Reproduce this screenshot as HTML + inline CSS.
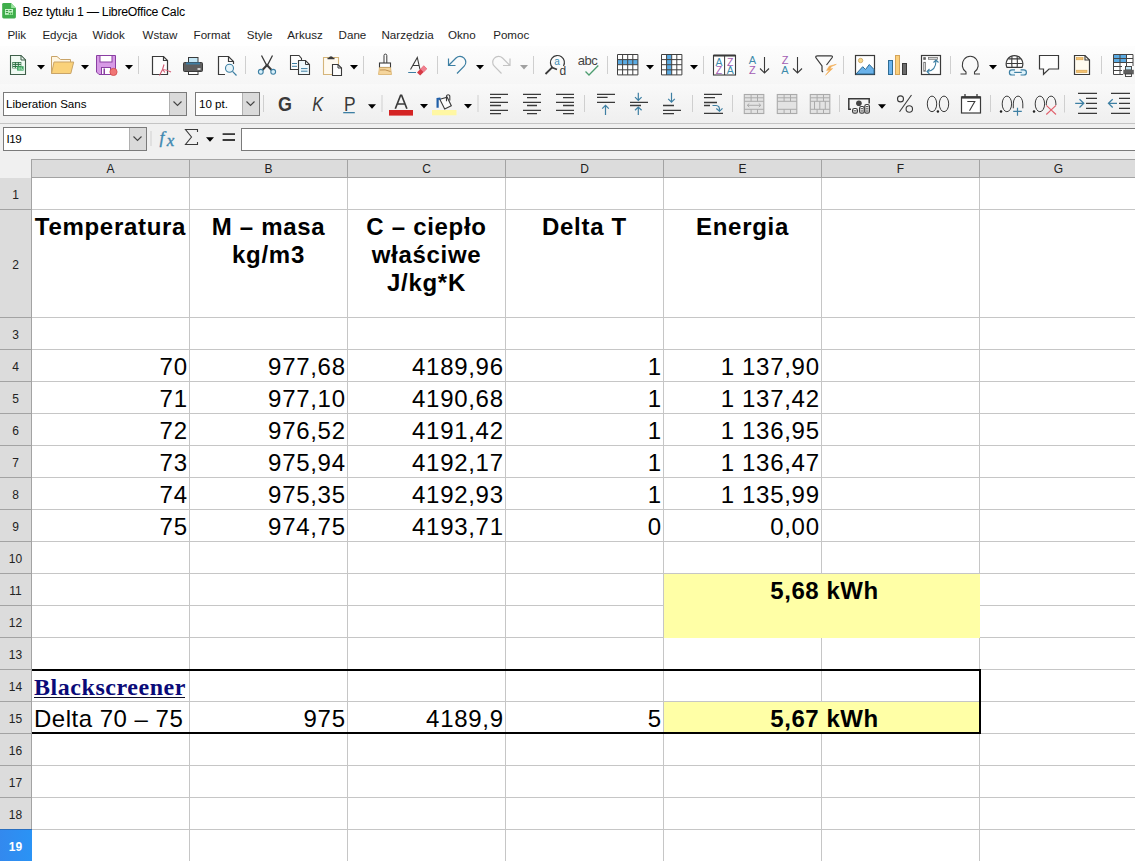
<!DOCTYPE html><html><head><meta charset="utf-8"><style>
*{margin:0;padding:0;box-sizing:border-box}
html,body{width:1135px;height:861px;overflow:hidden;background:#fff;font-family:"Liberation Sans",sans-serif}
.ab{position:absolute}
.t{position:absolute;white-space:nowrap;color:#000}
.ui{font-size:11.6px;color:#1a1a1a}
.cell{font-size:24px;line-height:28px;letter-spacing:0.7px}
.b{font-weight:bold}
.hl{position:absolute;height:1px;background:#c6c6c6}
.vl{position:absolute;width:1px;background:#c6c6c6}
.hdr{font-size:12px;color:#222;text-align:center;line-height:14px}
</style></head><body>

<div class="ab" style="left:0;top:0;width:1135px;height:46px;background:#fff"></div>
<div class="ab" style="left:0;top:46px;width:1135px;height:38px;background:linear-gradient(#fdfdfd,#f6f6f6)"></div>
<div class="ab" style="left:0;top:84px;width:1135px;height:39px;background:linear-gradient(#f9f9f9,#efefef)"></div>
<div class="ab" style="left:0;top:123px;width:1135px;height:1px;background:#c4c4c4"></div>
<div class="ab" style="left:0;top:124px;width:1135px;height:35px;background:#f0f0f0"></div>
<div class="t ui" style="left:22.5px;top:2.8px;font-size:12.3px;letter-spacing:-0.27px;line-height:18px;color:#000">Bez tytułu 1 — LibreOffice Calc</div>
<div class="t ui" style="left:7.4px;top:26px;line-height:18px;color:#1e1e1e">Plik</div>
<div class="t ui" style="left:42.4px;top:26px;line-height:18px;color:#1e1e1e">Edycja</div>
<div class="t ui" style="left:92.5px;top:26px;line-height:18px;color:#1e1e1e">Widok</div>
<div class="t ui" style="left:142.6px;top:26px;line-height:18px;color:#1e1e1e">Wstaw</div>
<div class="t ui" style="left:193.6px;top:26px;line-height:18px;color:#1e1e1e">Format</div>
<div class="t ui" style="left:246.7px;top:26px;line-height:18px;color:#1e1e1e">Style</div>
<div class="t ui" style="left:287.3px;top:26px;line-height:18px;color:#1e1e1e">Arkusz</div>
<div class="t ui" style="left:338.6px;top:26px;line-height:18px;color:#1e1e1e">Dane</div>
<div class="t ui" style="left:381.5px;top:26px;line-height:18px;color:#1e1e1e">Narzędzia</div>
<div class="t ui" style="left:448.0px;top:26px;line-height:18px;color:#1e1e1e">Okno</div>
<div class="t ui" style="left:493.2px;top:26px;line-height:18px;color:#1e1e1e">Pomoc</div>
<div class="ab" style="left:0;top:151px;width:1135px;height:8px;background:#f0f0f0"></div>
<div class="ab" style="left:0;top:159px;width:31px;height:19px;background:#f0f0f0"></div>
<div class="ab" style="left:31px;top:159px;width:1104px;height:1px;background:#a3a3a3"></div>
<div class="ab" style="left:32px;top:160px;width:1103px;height:17px;background:#dcdcdc"></div>
<div class="ab" style="left:31px;top:177px;width:1104px;height:1px;background:#a3a3a3"></div>
<div class="ab" style="left:0;top:178px;width:31px;height:683px;background:#dcdcdc"></div>
<div class="ab" style="left:31px;top:159px;width:1px;height:702px;background:#a3a3a3"></div>
<div class="ab" style="left:189px;top:160px;width:1px;height:17px;background:#a3a3a3"></div>
<div class="t hdr" style="left:32px;width:157px;top:162px">A</div>
<div class="ab" style="left:347px;top:160px;width:1px;height:17px;background:#a3a3a3"></div>
<div class="t hdr" style="left:190px;width:157px;top:162px">B</div>
<div class="ab" style="left:505px;top:160px;width:1px;height:17px;background:#a3a3a3"></div>
<div class="t hdr" style="left:348px;width:157px;top:162px">C</div>
<div class="ab" style="left:663px;top:160px;width:1px;height:17px;background:#a3a3a3"></div>
<div class="t hdr" style="left:506px;width:157px;top:162px">D</div>
<div class="ab" style="left:821px;top:160px;width:1px;height:17px;background:#a3a3a3"></div>
<div class="t hdr" style="left:664px;width:157px;top:162px">E</div>
<div class="ab" style="left:979px;top:160px;width:1px;height:17px;background:#a3a3a3"></div>
<div class="t hdr" style="left:822px;width:157px;top:162px">F</div>
<div class="t hdr" style="left:980px;width:157px;top:162px">G</div>
<div class="vl" style="left:189px;top:178px;height:683px"></div>
<div class="vl" style="left:347px;top:178px;height:683px"></div>
<div class="vl" style="left:505px;top:178px;height:683px"></div>
<div class="vl" style="left:663px;top:178px;height:683px"></div>
<div class="vl" style="left:821px;top:178px;height:683px"></div>
<div class="vl" style="left:979px;top:178px;height:683px"></div>
<div class="hl" style="left:32px;top:209px;width:1103px"></div>
<div class="ab" style="left:0;top:209px;width:31px;height:1px;background:#a3a3a3"></div>
<div class="hl" style="left:32px;top:317px;width:1103px"></div>
<div class="ab" style="left:0;top:317px;width:31px;height:1px;background:#a3a3a3"></div>
<div class="hl" style="left:32px;top:349px;width:1103px"></div>
<div class="ab" style="left:0;top:349px;width:31px;height:1px;background:#a3a3a3"></div>
<div class="hl" style="left:32px;top:381px;width:1103px"></div>
<div class="ab" style="left:0;top:381px;width:31px;height:1px;background:#a3a3a3"></div>
<div class="hl" style="left:32px;top:413px;width:1103px"></div>
<div class="ab" style="left:0;top:413px;width:31px;height:1px;background:#a3a3a3"></div>
<div class="hl" style="left:32px;top:445px;width:1103px"></div>
<div class="ab" style="left:0;top:445px;width:31px;height:1px;background:#a3a3a3"></div>
<div class="hl" style="left:32px;top:477px;width:1103px"></div>
<div class="ab" style="left:0;top:477px;width:31px;height:1px;background:#a3a3a3"></div>
<div class="hl" style="left:32px;top:509px;width:1103px"></div>
<div class="ab" style="left:0;top:509px;width:31px;height:1px;background:#a3a3a3"></div>
<div class="hl" style="left:32px;top:541px;width:1103px"></div>
<div class="ab" style="left:0;top:541px;width:31px;height:1px;background:#a3a3a3"></div>
<div class="hl" style="left:32px;top:573px;width:1103px"></div>
<div class="ab" style="left:0;top:573px;width:31px;height:1px;background:#a3a3a3"></div>
<div class="hl" style="left:32px;top:605px;width:1103px"></div>
<div class="ab" style="left:0;top:605px;width:31px;height:1px;background:#a3a3a3"></div>
<div class="hl" style="left:32px;top:637px;width:1103px"></div>
<div class="ab" style="left:0;top:637px;width:31px;height:1px;background:#a3a3a3"></div>
<div class="hl" style="left:32px;top:669px;width:1103px"></div>
<div class="ab" style="left:0;top:669px;width:31px;height:1px;background:#a3a3a3"></div>
<div class="hl" style="left:32px;top:701px;width:1103px"></div>
<div class="ab" style="left:0;top:701px;width:31px;height:1px;background:#a3a3a3"></div>
<div class="hl" style="left:32px;top:733px;width:1103px"></div>
<div class="ab" style="left:0;top:733px;width:31px;height:1px;background:#a3a3a3"></div>
<div class="hl" style="left:32px;top:765px;width:1103px"></div>
<div class="ab" style="left:0;top:765px;width:31px;height:1px;background:#a3a3a3"></div>
<div class="hl" style="left:32px;top:797px;width:1103px"></div>
<div class="ab" style="left:0;top:797px;width:31px;height:1px;background:#a3a3a3"></div>
<div class="hl" style="left:32px;top:829px;width:1103px"></div>
<div class="ab" style="left:0;top:829px;width:31px;height:1px;background:#a3a3a3"></div>
<div class="t hdr" style="left:0;width:31px;top:187.5px">1</div>
<div class="t hdr" style="left:0;width:31px;top:257.5px">2</div>
<div class="t hdr" style="left:0;width:31px;top:327.5px">3</div>
<div class="t hdr" style="left:0;width:31px;top:359.5px">4</div>
<div class="t hdr" style="left:0;width:31px;top:391.5px">5</div>
<div class="t hdr" style="left:0;width:31px;top:423.5px">6</div>
<div class="t hdr" style="left:0;width:31px;top:455.5px">7</div>
<div class="t hdr" style="left:0;width:31px;top:487.5px">8</div>
<div class="t hdr" style="left:0;width:31px;top:519.5px">9</div>
<div class="t hdr" style="left:0;width:31px;top:551.5px">10</div>
<div class="t hdr" style="left:0;width:31px;top:583.5px">11</div>
<div class="t hdr" style="left:0;width:31px;top:615.5px">12</div>
<div class="t hdr" style="left:0;width:31px;top:647.5px">13</div>
<div class="t hdr" style="left:0;width:31px;top:679.5px">14</div>
<div class="t hdr" style="left:0;width:31px;top:711.5px">15</div>
<div class="t hdr" style="left:0;width:31px;top:743.5px">16</div>
<div class="t hdr" style="left:0;width:31px;top:775.5px">17</div>
<div class="t hdr" style="left:0;width:31px;top:807.5px">18</div>
<div class="ab" style="left:0;top:829px;width:32px;height:32px;background:linear-gradient(90deg,#3389ee,#2a93f5)"></div>
<div class="ab" style="left:0;top:829px;width:32px;height:1px;background:#2a6fbf"></div>
<div class="t hdr b" style="left:0;width:31px;top:840px;color:#fff">19</div>
<div class="ab" style="left:664px;top:574px;width:316px;height:64px;background:#ffffa6"></div>
<div class="ab" style="left:664px;top:702px;width:316px;height:31px;background:#ffffa6"></div>
<div class="ab" style="left:32px;top:669px;width:949px;height:2px;background:#000"></div>
<div class="ab" style="left:32px;top:732px;width:949px;height:2px;background:#000"></div>
<div class="ab" style="left:979px;top:669px;width:2px;height:65px;background:#000"></div>
<div class="t cell b" style="left:32px;width:157px;text-align:center;top:212.7px;">Temperatura</div>
<div class="t cell b" style="left:190px;width:157px;text-align:center;top:212.7px;">M – masa<br>kg/m3</div>
<div class="t cell b" style="left:348px;width:157px;text-align:center;top:212.7px;">C – ciepło<br>właściwe<br>J/kg*K</div>
<div class="t cell b" style="left:506px;width:157px;text-align:center;top:212.7px;">Delta T</div>
<div class="t cell b" style="left:664px;width:157px;text-align:center;top:212.7px;">Energia</div>
<div class="t cell" style="left:32px;width:155.7px;text-align:right;top:352.7px;">70</div>
<div class="t cell" style="left:190px;width:155.7px;text-align:right;top:352.7px;">977,68</div>
<div class="t cell" style="left:348px;width:155.7px;text-align:right;top:352.7px;">4189,96</div>
<div class="t cell" style="left:506px;width:155.7px;text-align:right;top:352.7px;">1</div>
<div class="t cell" style="left:664px;width:155.7px;text-align:right;top:352.7px;">1 137,90</div>
<div class="t cell" style="left:32px;width:155.7px;text-align:right;top:384.7px;">71</div>
<div class="t cell" style="left:190px;width:155.7px;text-align:right;top:384.7px;">977,10</div>
<div class="t cell" style="left:348px;width:155.7px;text-align:right;top:384.7px;">4190,68</div>
<div class="t cell" style="left:506px;width:155.7px;text-align:right;top:384.7px;">1</div>
<div class="t cell" style="left:664px;width:155.7px;text-align:right;top:384.7px;">1 137,42</div>
<div class="t cell" style="left:32px;width:155.7px;text-align:right;top:416.7px;">72</div>
<div class="t cell" style="left:190px;width:155.7px;text-align:right;top:416.7px;">976,52</div>
<div class="t cell" style="left:348px;width:155.7px;text-align:right;top:416.7px;">4191,42</div>
<div class="t cell" style="left:506px;width:155.7px;text-align:right;top:416.7px;">1</div>
<div class="t cell" style="left:664px;width:155.7px;text-align:right;top:416.7px;">1 136,95</div>
<div class="t cell" style="left:32px;width:155.7px;text-align:right;top:448.7px;">73</div>
<div class="t cell" style="left:190px;width:155.7px;text-align:right;top:448.7px;">975,94</div>
<div class="t cell" style="left:348px;width:155.7px;text-align:right;top:448.7px;">4192,17</div>
<div class="t cell" style="left:506px;width:155.7px;text-align:right;top:448.7px;">1</div>
<div class="t cell" style="left:664px;width:155.7px;text-align:right;top:448.7px;">1 136,47</div>
<div class="t cell" style="left:32px;width:155.7px;text-align:right;top:480.7px;">74</div>
<div class="t cell" style="left:190px;width:155.7px;text-align:right;top:480.7px;">975,35</div>
<div class="t cell" style="left:348px;width:155.7px;text-align:right;top:480.7px;">4192,93</div>
<div class="t cell" style="left:506px;width:155.7px;text-align:right;top:480.7px;">1</div>
<div class="t cell" style="left:664px;width:155.7px;text-align:right;top:480.7px;">1 135,99</div>
<div class="t cell" style="left:32px;width:155.7px;text-align:right;top:512.7px;">75</div>
<div class="t cell" style="left:190px;width:155.7px;text-align:right;top:512.7px;">974,75</div>
<div class="t cell" style="left:348px;width:155.7px;text-align:right;top:512.7px;">4193,71</div>
<div class="t cell" style="left:506px;width:155.7px;text-align:right;top:512.7px;">0</div>
<div class="t cell" style="left:664px;width:155.7px;text-align:right;top:512.7px;">0,00</div>
<div class="t cell b" style="left:666px;width:317px;text-align:center;top:576.7px;letter-spacing:0.55px">5,68 kWh</div>
<div class="t cell b" style="left:666px;width:317px;text-align:center;top:704.7px;letter-spacing:0.55px">5,67 kWh</div>
<div class="t" style="left:34px;top:673.0px;font-family:'Liberation Serif',serif;font-weight:bold;font-size:24px;line-height:28px;color:#0a0a78;letter-spacing:0.55px">Blackscreener</div>
<div class="ab" style="left:34px;top:697px;width:151px;height:1.2px;background:#101028"></div>
<div class="t cell" style="left:34px;top:704.7px;letter-spacing:0.5px">Delta 70 – 75</div>
<div class="t cell" style="left:190px;width:155.7px;text-align:right;top:704.7px;">975</div>
<div class="t cell" style="left:348px;width:155.7px;text-align:right;top:704.7px;">4189,9</div>
<div class="t cell" style="left:506px;width:155.7px;text-align:right;top:704.7px;">5</div>
<div class="ab" style="left:3px;top:127px;width:144px;height:24px;background:#fff;border:1px solid #7a7a7a"></div>
<div class="ab" style="left:129px;top:128px;width:17px;height:22px;background:#dadada;border-left:1px solid #b0b0b0"></div>
<div class="t ui" style="left:6.4px;top:131px;line-height:16px;color:#000;letter-spacing:-0.4px">I19</div>
<div class="ab" style="left:241px;top:128px;width:900px;height:23px;background:#fff;border:1px solid #7a7a7a"></div>
<div class="ab" style="left:3px;top:92px;width:184px;height:24px;background:#fff;border:1px solid #7a7a7a"></div>
<div class="ab" style="left:169px;top:93px;width:17px;height:22px;background:#dadada;border-left:1px solid #b0b0b0"></div>
<div class="t ui" style="left:6px;top:96px;line-height:16px;color:#000">Liberation Sans</div>
<div class="ab" style="left:195px;top:92px;width:65px;height:24px;background:#fff;border:1px solid #7a7a7a"></div>
<div class="ab" style="left:242px;top:93px;width:17px;height:22px;background:#dadada;border-left:1px solid #b0b0b0"></div>
<div class="t ui" style="left:199px;top:96px;line-height:16px;color:#000">10 pt.</div>
<svg class="ab" style="left:0;top:0" width="1135" height="160"><path d="M10.5,55.5 H21 L25.5,60 V74.5 H10.5 Z" fill="#f0faf3" stroke="#3f5f4a" stroke-width="1.1"/>
<path d="M21,55.5 V60 H25.5 Z" fill="#f0faf3" stroke="#3f5f4a" stroke-width="1"/>
<rect x="12.3" y="62" width="9" height="6.4" fill="#2f6e45"/>
<rect x="12.90" y="62.80" width="2.0" height="1.1" fill="#d6efdc"/>
<rect x="12.90" y="64.90" width="2.0" height="1.1" fill="#d6efdc"/>
<rect x="12.90" y="67.00" width="2.0" height="1.1" fill="#d6efdc"/>
<rect x="15.85" y="62.80" width="2.0" height="1.1" fill="#d6efdc"/>
<rect x="15.85" y="64.90" width="2.0" height="1.1" fill="#d6efdc"/>
<rect x="15.85" y="67.00" width="2.0" height="1.1" fill="#d6efdc"/>
<rect x="18.80" y="62.80" width="2.0" height="1.1" fill="#d6efdc"/>
<rect x="18.80" y="64.90" width="2.0" height="1.1" fill="#d6efdc"/>
<rect x="18.80" y="67.00" width="2.0" height="1.1" fill="#d6efdc"/>
<rect x="17.1" y="66.2" width="6.5" height="4.4" fill="#39a35c"/>
<rect x="18.6" y="67.3" width="1" height="2.5" fill="#c8f0d4"/><rect x="20.6" y="67.3" width="1" height="2.5" fill="#c8f0d4"/><rect x="22.2" y="68.8" width="0.8" height="1" fill="#c8f0d4"/>
<path d="M37,65 h8 l-4,4.5 z" fill="#000"/>
<path d="M51.5,73.5 V56.5 H57 L60.5,59.5 H70.5 V62" fill="#fff6e2" stroke="#c9a468" stroke-width="1"/>
<path d="M54,62 H73.7 L70.8,73.5 H51.5 Z" fill="#fad27a" stroke="#c9a468" stroke-width="1"/>
<path d="M81,65 h8 l-4,4.5 z" fill="#000"/>
<path d="M96.5,55.5 H115.5 V74.5 H99 L96.5,72 Z" fill="#d79ae6" stroke="#8a3fa2" stroke-width="1"/>
<rect x="100" y="55.5" width="12" height="6.5" fill="#fff" stroke="#8a3fa2" stroke-width="1"/>
<rect x="101.5" y="67.5" width="9" height="7" fill="#fff" stroke="#8a3fa2" stroke-width="1"/>
<rect x="103.5" y="68.5" width="1.5" height="5.5" fill="#8a3fa2"/>
<circle cx="113.5" cy="71.9" r="3.6" fill="#f07575" stroke="#d24c4c" stroke-width="0.8"/>
<path d="M125,65 h8 l-4,4.5 z" fill="#000"/>
<rect x="138" y="56" width="1" height="18" fill="#cfcfcf"/>
<path d="M152.5,56.5 H163.5 L167.5,60.5 V74.5 H152.5 Z" fill="#fdfdfd" stroke="#3a3a3a" stroke-width="1.2"/>
<path d="M163.5,56.5 V60.5 H167.5" fill="none" stroke="#3a3a3a" stroke-width="1.2"/>
<path d="M164,64.5 L162.5,69.5 L159.5,75.5 M162.5,69.5 Q166,69.5 171,72 M162.5,69.5 L165,72.5" fill="none" stroke="#d35a72" stroke-width="1.1"/>
<rect x="188.5" y="57.5" width="9.5" height="5.5" fill="#c3e6f5" stroke="#3a3a3a" stroke-width="1"/>
<rect x="183.5" y="62.5" width="19" height="9" rx="1" fill="#5e5e5e" stroke="#3a3a3a" stroke-width="1"/>
<rect x="186" y="62.5" width="14" height="2" fill="#3f7ea3"/>
<rect x="197.5" y="68.3" width="3" height="1.4" fill="#fff"/>
<rect x="188.5" y="71.5" width="9.5" height="3" fill="#fff" stroke="#3a3a3a" stroke-width="1"/>
<path d="M225,74.5 H218.5 V56.5 H228.5 L233.5,61.5 V64" fill="#fdfdfd" stroke="#3a3a3a" stroke-width="1.2"/>
<path d="M228.5,56.5 V61.5 H233.5" fill="none" stroke="#3a3a3a" stroke-width="1.2"/>
<circle cx="229.5" cy="68.3" r="4" fill="#e6f4fa" stroke="#3d7fa3" stroke-width="1.1"/>
<path d="M232.5,71.3 L236.5,75.5" stroke="#3d7fa3" stroke-width="1.2"/>
<rect x="245" y="56" width="1" height="18" fill="#cfcfcf"/>
<path d="M261.5,55.5 L267,66 L272.5,55.5" fill="none" stroke="#3a3a3a" stroke-width="1.3"/>
<path d="M262.5,70 L267,65 L271.5,70" fill="none" stroke="#3a3a3a" stroke-width="2"/>
<circle cx="260.8" cy="71.8" r="2.4" fill="#d8f0fa" stroke="#3d7fa3" stroke-width="1.1"/>
<circle cx="273.2" cy="71.8" r="2.4" fill="#d8f0fa" stroke="#3d7fa3" stroke-width="1.1"/>
<path d="M298.5,69.5 H290.5 V55.5 H299 L301.5,58.5 V60.5" fill="#fdfdfd" stroke="#3a3a3a" stroke-width="1.1"/>
<path d="M298.5,60.5 H305.5 L309.5,64.5 V74.5 H298.5 Z" fill="#eef8fc" stroke="#3a3a3a" stroke-width="1.1"/>
<path d="M305.5,60.5 V64.5 H309.5" fill="none" stroke="#3a3a3a" stroke-width="1"/>
<path d="M292,63.5 H297 M292,66.3 H297 M301,68.6 H307.5 M301,71.2 H307.5" stroke="#3d7fa3" stroke-width="1"/>
<path d="M332,74.5 H323.5 V57.5 H338.5 V64" fill="#fffaf0" stroke="#d5b57a" stroke-width="1.1"/>
<path d="M327.5,58.5 H334.5 M329.5,58 A1.6,1.6 0 0 1 332.5,58" fill="none" stroke="#3a3a3a" stroke-width="1.5"/>
<path d="M332.5,64.5 H338 L341.5,68 V75.5 H332.5 Z" fill="#fdfdfd" stroke="#3a3a3a" stroke-width="1.1"/>
<path d="M338,64.5 V68 H341.5" fill="none" stroke="#3a3a3a" stroke-width="1"/>
<path d="M350,65 h8 l-4,4.5 z" fill="#000"/>
<rect x="363" y="56" width="1" height="18" fill="#cfcfcf"/>
<path d="M384,63 V55.5 A1.4,1.4 0 0 1 386.8,55.5 V63" fill="#fff" stroke="#3a3a3a" stroke-width="1"/>
<rect x="379.5" y="63" width="11" height="4.5" fill="#fff" stroke="#3a3a3a" stroke-width="1.1"/>
<path d="M379.5,67.5 H390.5 L391.5,74.5 H378.5 Z" fill="#f5d59c" stroke="#d9b06a" stroke-width="0.8"/>
<path d="M380,70 Q385,69 390.5,71.5" fill="none" stroke="#b98a4a" stroke-width="0.9"/>
<path d="M410.5,69.5 L417.3,57.5 L420,69.5 M412.8,65.5 H418.8" fill="none" stroke="#3a3a3a" stroke-width="1.1"/>
<path d="M408.2,72.5 H416" stroke="#3d7fa3" stroke-width="1"/>
<path d="M417,72.5 L423.8,65.6 L427,68.8 L420.2,75.6 Z" fill="#d63a45"/>
<path d="M420.5,69 L423.8,65.6 L427,68.8 L423.7,72.2 Z" fill="#f08090"/>
<rect x="437" y="56" width="1" height="18" fill="#cfcfcf"/>
<path d="M448.5,58.5 V65.5 H455.5 M448.5,65.5 L456,58 A5.8,5.8 0 0 1 464.2,66.2 L457,73.5" fill="none" stroke="#3d7fa3" stroke-width="1.2"/>
<path d="M476,65 h8 l-4,4.5 z" fill="#000"/>
<g transform="translate(958.5,0) scale(-1,1)"><path d="M448.5,58.5 V65.5 H455.5 M448.5,65.5 L456,58 A5.8,5.8 0 0 1 464.2,66.2 L457,73.5" fill="none" stroke="#c4c4c4" stroke-width="1.2"/></g>
<path d="M520,65 h8 l-4,4.5 z" fill="#a0a0a0"/>
<rect x="533" y="56" width="1" height="18" fill="#cfcfcf"/>
<path d="M563.5,66 A7,7 0 1 0 552.5,67.5" fill="none" stroke="#3a3a3a" stroke-width="1.2"/>
<path d="M545.5,74 L552,67.5 L557,69.5" fill="none" stroke="#3a3a3a" stroke-width="1.8"/>
<text x="557" y="65" font-family="Liberation Sans" font-size="10" fill="#3a8eb2" text-anchor="middle">a</text>
<text x="562.8" y="74.5" font-family="Liberation Sans" font-size="12" fill="#3a3a3a" text-anchor="middle">d</text>
<text x="587.5" y="64.5" font-family="Liberation Sans" font-size="13" fill="#444" text-anchor="middle" letter-spacing="-0.5">abc</text>
<path d="M585.5,71.5 L589,75 L598.3,65.5" fill="none" stroke="#4d9d70" stroke-width="1.3"/>
<rect x="607" y="56" width="1" height="18" fill="#cfcfcf"/>
<rect x="617.50" y="54.50" width="5.10" height="5.10" fill="#fff"/>
<rect x="617.50" y="59.60" width="5.10" height="5.10" fill="#5aaae2"/>
<rect x="617.50" y="64.70" width="5.10" height="5.10" fill="#fff"/>
<rect x="617.50" y="69.80" width="5.10" height="5.10" fill="#fff"/>
<rect x="622.60" y="54.50" width="5.10" height="5.10" fill="#fff"/>
<rect x="622.60" y="59.60" width="5.10" height="5.10" fill="#5aaae2"/>
<rect x="622.60" y="64.70" width="5.10" height="5.10" fill="#fff"/>
<rect x="622.60" y="69.80" width="5.10" height="5.10" fill="#fff"/>
<rect x="627.70" y="54.50" width="5.10" height="5.10" fill="#fff"/>
<rect x="627.70" y="59.60" width="5.10" height="5.10" fill="#5aaae2"/>
<rect x="627.70" y="64.70" width="5.10" height="5.10" fill="#fff"/>
<rect x="627.70" y="69.80" width="5.10" height="5.10" fill="#fff"/>
<rect x="632.80" y="54.50" width="5.10" height="5.10" fill="#fff"/>
<rect x="632.80" y="59.60" width="5.10" height="5.10" fill="#5aaae2"/>
<rect x="632.80" y="64.70" width="5.10" height="5.10" fill="#fff"/>
<rect x="632.80" y="69.80" width="5.10" height="5.10" fill="#fff"/>
<path d="M617.50,54.5 V74.90 M617.5,54.50 H637.90 M622.60,54.5 V74.90 M617.5,59.60 H637.90 M627.70,54.5 V74.90 M617.5,64.70 H637.90 M632.80,54.5 V74.90 M617.5,69.80 H637.90 M637.90,54.5 V74.90 M617.5,74.90 H637.90 " stroke="#404040" stroke-width="1" fill="none"/>
<path d="M646,65 h8 l-4,4.5 z" fill="#000"/>
<rect x="661.50" y="54.50" width="5.10" height="5.10" fill="#fff"/>
<rect x="661.50" y="59.60" width="5.10" height="5.10" fill="#fff"/>
<rect x="661.50" y="64.70" width="5.10" height="5.10" fill="#fff"/>
<rect x="661.50" y="69.80" width="5.10" height="5.10" fill="#fff"/>
<rect x="666.60" y="54.50" width="5.10" height="5.10" fill="#5aaae2"/>
<rect x="666.60" y="59.60" width="5.10" height="5.10" fill="#5aaae2"/>
<rect x="666.60" y="64.70" width="5.10" height="5.10" fill="#5aaae2"/>
<rect x="666.60" y="69.80" width="5.10" height="5.10" fill="#5aaae2"/>
<rect x="671.70" y="54.50" width="5.10" height="5.10" fill="#fff"/>
<rect x="671.70" y="59.60" width="5.10" height="5.10" fill="#fff"/>
<rect x="671.70" y="64.70" width="5.10" height="5.10" fill="#fff"/>
<rect x="671.70" y="69.80" width="5.10" height="5.10" fill="#fff"/>
<rect x="676.80" y="54.50" width="5.10" height="5.10" fill="#fff"/>
<rect x="676.80" y="59.60" width="5.10" height="5.10" fill="#fff"/>
<rect x="676.80" y="64.70" width="5.10" height="5.10" fill="#fff"/>
<rect x="676.80" y="69.80" width="5.10" height="5.10" fill="#fff"/>
<path d="M661.50,54.5 V74.90 M661.5,54.50 H681.90 M666.60,54.5 V74.90 M661.5,59.60 H681.90 M671.70,54.5 V74.90 M661.5,64.70 H681.90 M676.80,54.5 V74.90 M661.5,69.80 H681.90 M681.90,54.5 V74.90 M661.5,74.90 H681.90 " stroke="#404040" stroke-width="1" fill="none"/>
<path d="M690,65 h8 l-4,4.5 z" fill="#000"/>
<rect x="703" y="56" width="1" height="18" fill="#cfcfcf"/>
<rect x="713.5" y="55.5" width="22" height="19.5" fill="#fff" stroke="#3a3a3a" stroke-width="1.1"/>
<rect x="713.5" y="54.5" width="22" height="2" fill="#3a3a3a"/>
<path d="M724.6,56 V75" stroke="#3a3a3a" stroke-width="1"/>
<text x="719" y="65.5" font-family="Liberation Sans" font-size="10.5" fill="#3d8bab" text-anchor="middle">A</text>
<text x="719" y="74" font-family="Liberation Sans" font-size="10.5" fill="#a35db3" text-anchor="middle">Z</text>
<text x="730.2" y="65.5" font-family="Liberation Sans" font-size="10.5" fill="#a35db3" text-anchor="middle">Z</text>
<text x="730.2" y="74" font-family="Liberation Sans" font-size="10.5" fill="#3d8bab" text-anchor="middle">A</text>
<text x="752.3" y="63.8" font-family="Liberation Sans" font-size="11" fill="#3d8bab" text-anchor="middle">A</text>
<text x="752.3" y="74.3" font-family="Liberation Sans" font-size="11" fill="#a35db3" text-anchor="middle">Z</text>
<path d="M764.5,57 V73 M760,68.5 L764.5,73 L769,68.5" fill="none" stroke="#3a3a3a" stroke-width="1.1"/>
<text x="785" y="63.8" font-family="Liberation Sans" font-size="11" fill="#a35db3" text-anchor="middle">Z</text>
<text x="785" y="74.3" font-family="Liberation Sans" font-size="11" fill="#3d8bab" text-anchor="middle">A</text>
<path d="M797.5,57 V73 M793,68.5 L797.5,73 L802,68.5" fill="none" stroke="#3a3a3a" stroke-width="1.1"/>
<path d="M823,72 L822,71 V66 L815.8,57.5 Q815.5,55.8 817.5,55.8 H831 Q833,55.8 832.2,57.5 L826.5,65" fill="none" stroke="#3a3a3a" stroke-width="1.2"/>
<path d="M836.3,64.3 L829.2,66.2 L826.6,70.4 L829.6,69.9 L825.6,75.2 L832.6,68.6 L829.9,68.9 L831.4,66.6 Z" fill="#f2ac55" stroke="#f2ac55" stroke-width="0.6" stroke-linejoin="round"/>
<rect x="843" y="56" width="1" height="18" fill="#cfcfcf"/>
<rect x="855.5" y="55.5" width="19" height="19" fill="#fff" stroke="#3a3a3a" stroke-width="1.2"/>
<circle cx="860.6" cy="60.5" r="2.2" fill="#f7d88c" stroke="#c9a25e" stroke-width="0.8"/>
<path d="M856,74 L862.7,66.7 L865.5,69.5 L869.3,64.5 L874,69.5 V74 Z" fill="#6ab2ea" stroke="#2d6b94" stroke-width="1"/>
<rect x="888.5" y="60.5" width="4" height="14" fill="#6cb4ee" stroke="#2e6c94" stroke-width="1"/>
<rect x="895.5" y="55.5" width="4" height="19" fill="#fcd07c" stroke="#d4a45a" stroke-width="1"/>
<rect x="902.5" y="63.5" width="4" height="11" fill="#6b6b6b" stroke="#3a3a3a" stroke-width="1"/>
<rect x="921.5" y="55.5" width="19" height="19" fill="#fff" stroke="#3a3a3a" stroke-width="1.2"/>
<rect x="923.7" y="57.6" width="1.8" height="1.8" fill="none" stroke="#555" stroke-width="0.8"/>
<rect x="928.5" y="57.5" width="9" height="1.8" fill="#ddd" stroke="#777" stroke-width="0.8"/>
<rect x="923.7" y="62.3" width="1.8" height="9" fill="#ddd" stroke="#777" stroke-width="0.8"/>
<path d="M927,71.5 Q936,71 936,60.5 M933.5,62.5 L936,60 L938.5,62.5 M929.5,69 L927,71.5 L929.5,74" fill="none" stroke="#3d7fa3" stroke-width="1.1"/>
<rect x="950" y="56" width="1" height="18" fill="#cfcfcf"/>
<path d="M960.5,74 H966 V72 A8,8.5 0 1 1 974.5,72 V74 H980" fill="none" stroke="#3a3a3a" stroke-width="1.1"/>
<path d="M989,65 h8 l-4,4.5 z" fill="#000"/>
<path d="M1007,67.4 A8.3,8.3 0 1 1 1022,67.4 Z" fill="#fff" stroke="#3a3a3a" stroke-width="1.2"/>
<path d="M1012,56.2 Q1011.5,62 1012,67.4 M1017.1,56.2 Q1017.6,62 1017.1,67.4 M1008.4,58.9 H1020.6 M1006.4,63.5 H1022.6" fill="none" stroke="#3a3a3a" stroke-width="1.1"/>
<path d="M1015,69.8 H1012 A2.6,2.6 0 0 0 1012,75 H1015 M1020.6,69.8 H1023.8 A2.6,2.6 0 0 1 1023.8,75 H1020.6" fill="#dff3fb" stroke="#3d7fa3" stroke-width="1.2"/>
<path d="M1014.2,72.4 H1021.8" stroke="#3d7fa3" stroke-width="1.2"/>
<path d="M1039.5,55.5 H1058.5 V69 H1049 L1043.5,74.3 V69 H1039.5 Z" fill="#fdfdfd" stroke="#3a3a3a" stroke-width="1.2"/>
<path d="M1074.5,55.5 H1085 L1089.5,60 V74.5 H1074.5 Z" fill="#fffbf0" stroke="#3a3a3a" stroke-width="1.2"/>
<path d="M1085,55.5 V60 H1089.5" fill="none" stroke="#3a3a3a" stroke-width="1.1"/>
<rect x="1076.5" y="57.5" width="6.5" height="2.3" fill="#f5c170" stroke="#d4a04a" stroke-width="0.6"/>
<rect x="1076.5" y="70.2" width="10.5" height="2.3" fill="#f5c170" stroke="#d4a04a" stroke-width="0.6"/>
<rect x="1101" y="56" width="1" height="18" fill="#cfcfcf"/>
<rect x="1113.5" y="54.5" width="19.5" height="20" fill="#fff"/>
<rect x="1113.5" y="54.5" width="13" height="8" fill="#5aaae2"/>
<path d="M1113.5,54.5 V74.5 H1123 M1113.5,54.5 H1133 V66 M1113.5,58.5 H1133 M1113.5,62.5 H1133 M1113.5,66.5 H1122 M1113.5,70.5 H1122 M1120,54.5 V74.5 M1126.5,54.5 V66" fill="none" stroke="#454545" stroke-width="1"/>
<rect x="1125.5" y="66.5" width="6" height="3.5" fill="#c3e6f5" stroke="#3a3a3a" stroke-width="0.9"/>
<rect x="1123.3" y="69.8" width="10.5" height="4.5" fill="#5e5e5e"/>
<rect x="1125.5" y="74" width="6" height="2.5" fill="#fff" stroke="#3a3a3a" stroke-width="0.9"/>
<path d="M173.5,101.5 L177.5,105.5 L181.5,101.5" fill="none" stroke="#444" stroke-width="1.1"/>
<path d="M246.5,101.5 L250.5,105.5 L254.5,101.5" fill="none" stroke="#444" stroke-width="1.1"/>
<path d="M133.5,136.5 L137.5,140.5 L141.5,136.5" fill="none" stroke="#444" stroke-width="1.1"/>
<rect x="263" y="95" width="1" height="17" fill="#cfcfcf"/>
<text transform="translate(285.1,110.9) scale(0.93,1)" font-family="Liberation Sans" font-weight="bold" font-size="19.3" fill="#3a3a3a" text-anchor="middle">G</text>
<text transform="translate(317.6,110.9) scale(0.85,1)" font-family="Liberation Sans" font-style="italic" font-size="19.3" fill="#3a3a3a" text-anchor="middle">K</text>
<text transform="translate(349.8,110.9) scale(0.9,1)" font-family="Liberation Sans" font-size="19.3" fill="#3a3a3a" text-anchor="middle">P</text>
<rect x="343.2" y="112" width="11.6" height="1.3" fill="#3d7fa3"/>
<path d="M368,104.3 h8 l-4,4.5 z" fill="#000"/>
<rect x="381.5" y="95" width="1" height="17" fill="#cfcfcf"/>
<path d="M395.3,108.8 L400.6,95.3 H401.6 L406.9,108.8 M397.3,104 H405" fill="none" stroke="#3a3a3a" stroke-width="1.7"/>
<rect x="389" y="110" width="24" height="5.6" fill="#d42424"/>
<path d="M420,104 h8 l-4,4.5 z" fill="#000"/>
<rect x="432" y="110" width="24.5" height="5.3" fill="#fff7a3"/>
<path d="M439.8,99.3 L444.7,109 L451.3,105.8 L447.2,97.2 Z" fill="#fbfbfb" stroke="#3a3a3a" stroke-width="1.1"/>
<path d="M446.5,101.3 V96 A1.7,1.7 0 0 1 449.8,96 V100.5" fill="none" stroke="#3a3a3a" stroke-width="1.1"/>
<path d="M437.6,107.7 V99 L440.5,98.5" fill="none" stroke="#1f5ea8" stroke-width="2.2"/>
<path d="M464,104 h8 l-4,4.5 z" fill="#000"/>
<rect x="477.5" y="95" width="1" height="17" fill="#cfcfcf"/>
<path d="M490,94.4 H508 M490,97.6 H501 M490,102.4 H508 M490,105.5 H501 M490,110.4 H508 M490,113.6 H501 " stroke="#3a3a3a" stroke-width="1.3" fill="none"/>
<path d="M523,94.4 H541 M527,97.6 H537 M523,102.4 H541 M527,105.5 H537 M523,110.4 H541 M527,113.6 H537 " stroke="#3a3a3a" stroke-width="1.3" fill="none"/>
<path d="M556,94.4 H574 M563,97.6 H574 M556,102.4 H574 M563,105.5 H574 M556,110.4 H574 M563,113.6 H574 " stroke="#3a3a3a" stroke-width="1.3" fill="none"/>
<rect x="584" y="95" width="1" height="17" fill="#cfcfcf"/>
<path d="M597,94.4 H615 M597,97.4 H607.6 M597,102.4 H615 " stroke="#3a3a3a" stroke-width="1.3" fill="none"/>
<path d="M605.5,115 V105.5 M602.2,108.7 L605.5,105.4 L608.8,108.7" fill="none" stroke="#3d7fa3" stroke-width="1.2"/>
<path d="M630,102.4 H648 M630,105.5 H641 " stroke="#3a3a3a" stroke-width="1.3" fill="none"/>
<path d="M638.3,92.8 V100.3 M635,97.2 L638.3,100.5 L641.6,97.2 M638.3,115 V107 M635,110.2 L638.3,107 L641.6,110.2" fill="none" stroke="#3d7fa3" stroke-width="1.2"/>
<path d="M663,105.5 H674 M663,110.4 H681 M663,113.6 H674 " stroke="#3a3a3a" stroke-width="1.3" fill="none"/>
<path d="M671.5,92.8 V102 M668.2,98.8 L671.5,102.1 L674.8,98.8" fill="none" stroke="#3d7fa3" stroke-width="1.2"/>
<rect x="692" y="95" width="1" height="17" fill="#cfcfcf"/>
<path d="M704,94.3 H722 M704,97.6 H715 M704,102.5 H717 M704,105.5 H710 M704,113.4 H723 " stroke="#3a3a3a" stroke-width="1.3" fill="none"/>
<path d="M712.5,105.5 H716 Q720,105.5 719.5,111 M716.3,108.5 L719.5,111.3 L722.5,108.3" fill="none" stroke="#3d7fa3" stroke-width="1.2"/>
<rect x="732" y="95" width="1" height="17" fill="#cfcfcf"/>
<rect x="744.3" y="94.5" width="19.5" height="19" fill="#e3e3e3" stroke="#aaaaaa" stroke-width="1.1"/>
<path d="M744.3,97.8 H763.8 M744.3,101.3 H763.8 M744.3,109.3 H763.8 M751.0999999999999,94.5 V101.3 M757.5,94.5 V101.3 M751.0999999999999,109.3 V113.5 M757.5,109.3 V113.5 M747.3,105.3 H760.8 M749.3,103.5 L747.3,105.3 L749.3,107.1 M758.8,103.5 L760.8,105.3 L758.8,107.1" stroke="#aaaaaa" stroke-width="1" fill="none"/>
<rect x="777.3" y="94.5" width="19.5" height="19" fill="#e3e3e3" stroke="#aaaaaa" stroke-width="1.1"/>
<path d="M777.3,97.8 H796.8 M777.3,101.3 H796.8 M777.3,109.3 H796.8 M784.0999999999999,94.5 V101.3 M790.5,94.5 V101.3 M784.0999999999999,109.3 V113.5 M790.5,109.3 V113.5 " stroke="#aaaaaa" stroke-width="1" fill="none"/>
<rect x="810.3" y="94.5" width="19.5" height="19" fill="#e3e3e3" stroke="#aaaaaa" stroke-width="1.1"/>
<path d="M810.3,97.8 H829.8 M810.3,101.3 H829.8 M810.3,109.3 H829.8 M817.0999999999999,94.5 V101.3 M823.5,94.5 V101.3 M817.0999999999999,109.3 V113.5 M823.5,109.3 V113.5 M814.5,101.3 V109.3 M819.8,101.3 V109.3 M825.3,101.3 V109.3" stroke="#aaaaaa" stroke-width="1" fill="none"/>
<rect x="839" y="95" width="1" height="17" fill="#cfcfcf"/>
<path d="M851,109.3 H848.8 V98.8 H869.2 V103.5" fill="none" stroke="#3a3a3a" stroke-width="1.5"/>
<circle cx="858.9" cy="103.3" r="2.8" fill="#444"/>
<rect x="852.6" y="108.5" width="4.7999999999999545" height="4.7" rx="1.8" fill="#fff" stroke="#3a3a3a" stroke-width="1.2"/>
<path d="M853.6,110.85 H856.4 " stroke="#3a3a3a" stroke-width="1"/>
<rect x="859.6" y="106.5" width="4.600000000000023" height="6.7" rx="1.8" fill="#fff" stroke="#3a3a3a" stroke-width="1.2"/>
<path d="M860.6,108.73 H863.2 M860.6,110.97 H863.2 " stroke="#3a3a3a" stroke-width="1"/>
<rect x="864.8" y="104.5" width="4.600000000000023" height="8.7" rx="1.8" fill="#fff" stroke="#3a3a3a" stroke-width="1.2"/>
<path d="M865.8,106.67 H868.4 M865.8,108.85 H868.4 M865.8,111.03 H868.4 " stroke="#3a3a3a" stroke-width="1"/>
<path d="M878,104.2 h8 l-4,4.5 z" fill="#000"/>
<circle cx="900.5" cy="98.9" r="3" fill="none" stroke="#3a3a3a" stroke-width="1.1"/><circle cx="909.3" cy="109" r="3.2" fill="none" stroke="#3a3a3a" stroke-width="1.1"/><path d="M911.5,95 L899.5,111.8" stroke="#3a3a3a" stroke-width="1.1"/>
<ellipse cx="932" cy="103.9" rx="4.7" ry="7.8" fill="none" stroke="#3a3a3a" stroke-width="1"/><ellipse cx="944" cy="103.9" rx="4.7" ry="7.8" fill="none" stroke="#3a3a3a" stroke-width="1"/><circle cx="937.9" cy="111.5" r="1.2" fill="#222"/>
<rect x="961.5" y="97" width="19" height="16" fill="#fff" stroke="#3a3a3a" stroke-width="1.2"/>
<rect x="961.5" y="96.2" width="19" height="2.4" fill="#3a3a3a"/>
<path d="M965,94 V97 M977,94 V97" stroke="#3a3a3a" stroke-width="1.3"/>
<path d="M967.3,101.5 H974.8 L969.5,110.8" fill="none" stroke="#3a3a3a" stroke-width="1.1"/>
<rect x="990" y="95" width="1" height="17" fill="#cfcfcf"/>
<circle cx="1001" cy="111.6" r="1.25" fill="#222"/><ellipse cx="1006.9" cy="103.9" rx="4.7" ry="7.8" fill="none" stroke="#3a3a3a" stroke-width="1"/>
<path d="M1013.3,108.3 V103.9 A4.75,7.8 0 0 1 1022.8,103.9 V108.3" fill="none" stroke="#3a3a3a" stroke-width="1"/>
<path d="M1013.2,111.3 H1021.8 M1017.5,107.7 V115.8" stroke="#3d7fa3" stroke-width="1.2"/>
<circle cx="1034" cy="111.6" r="1.25" fill="#222"/><ellipse cx="1039.9" cy="103.9" rx="4.7" ry="7.8" fill="none" stroke="#3a3a3a" stroke-width="1"/>
<path d="M1046.3,105 V103.9 A4.8,7.8 0 0 1 1055.9,103.9 V105" fill="none" stroke="#3a3a3a" stroke-width="1"/>
<path d="M1046.3,105.3 L1056,114.5 M1056,105.3 L1046.3,114.5" stroke="#e0606c" stroke-width="1.1"/>
<rect x="1064" y="95" width="1" height="17.5" fill="#cfcfcf"/>
<path d="M1078,93.4 H1097 M1086,98.3 H1097 M1086,103.3 H1097 M1086,108.4 H1097 M1078,113.4 H1097 " stroke="#3a3a3a" stroke-width="1.3" fill="none"/>
<path d="M1075.2,103.3 H1084 M1079.5,99.2 L1083.8,103.3 L1079.5,107.5" fill="none" stroke="#3d7fa3" stroke-width="1.2"/>
<path d="M1111,93.4 H1130 M1119,98.3 H1130 M1119,103.3 H1130 M1119,108.4 H1130 M1111,113.4 H1130 " stroke="#3a3a3a" stroke-width="1.3" fill="none"/>
<path d="M1117,103.3 H1108.4 M1112.7,99.2 L1108.4,103.3 L1112.7,107.5" fill="none" stroke="#3d7fa3" stroke-width="1.2"/>
<rect x="150.5" y="131" width="1" height="15" fill="#cfcfcf"/>
<text x="159.5" y="143.3" font-family="Liberation Serif" font-style="italic" font-size="17.5" fill="#3d88b0" stroke="#3d88b0" stroke-width="0.35">f</text>
<text x="166.8" y="146.3" font-family="Liberation Serif" font-style="italic" font-size="17" fill="#3d88b0" stroke="#3d88b0" stroke-width="0.35">x</text>
<path d="M197.5,132 V129.5 H185.5 L191.5,137 L185.5,144.5 H197.5 V142" fill="none" stroke="#3a3a3a" stroke-width="1.1"/>
<path d="M206,137.3 h8 l-4,4.5 z" fill="#000"/>
<rect x="222.6" y="133.2" width="12.4" height="1.8" fill="#3a3a3a"/><rect x="222.6" y="139" width="12.4" height="2" fill="#3a3a3a"/>
<path d="M2.2,4.3 Q2.2,2.9 3.6,2.9 H11.1 L15.9,7.9 V17.1 Q15.9,18.5 14.5,18.5 H3.6 Q2.2,18.5 2.2,17.1 Z" fill="#3fae4c"/>
<path d="M11.1,2.9 V7.9 H15.9 Z" fill="#9be39f"/>
<rect x="5" y="9" width="8" height="5.8" fill="#c9f5cb"/>
<path d="M5.8,10.6 H8.2 M9.4,10.6 H11.6 M5.8,12.6 H8.2" stroke="#2f8a3a" stroke-width="1"/><rect x="8.3" y="12.3" width="4.7" height="2.5" fill="#8ee68f"/><path d="M9.5,13 V14.3 M11.4,12.8 V14.3" stroke="#2f8a3a" stroke-width="0.9"/></svg>
</body></html>
